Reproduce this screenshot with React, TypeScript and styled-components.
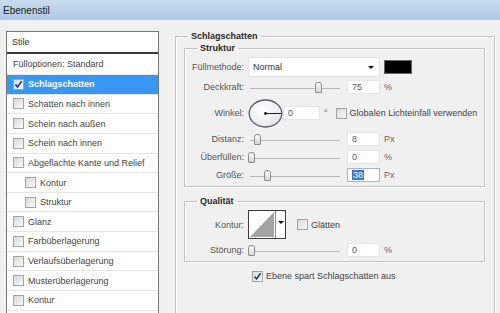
import React from "react";
import styled, { createGlobalStyle } from "styled-components";

const GlobalStyle = createGlobalStyle`
  html, body {
    margin: 0;
    padding: 0;
    background: #f0f0f0;
  }
  body {
    font-family: "Liberation Sans", Arial, sans-serif;
    font-size: 9px;
    color: #333;
  }
`;

const Window = styled.div`
  width: 500px;
  height: 313px;
  overflow: hidden;
  background: #f0f0f0;
`;

const TitleBar = styled.div`
  height: 20px;
  padding-left: 3px;
  display: flex;
  align-items: center;
  font-size: 10px;
  color: #1b1b1b;
  background: linear-gradient(#cadbef, #afc7e5);
`;

const Content = styled.div`
  display: flex;
  align-items: flex-start;
  padding-top: 11px;
`;

const StylePanel = styled.div`
  margin-left: 6px;
  width: 151px;
  height: 300px;
  border: 1px solid #74777c;
  background: #fff;
`;

const PanelHeader = styled.div`
  height: 20px;
  padding-left: 5px;
  display: flex;
  align-items: center;
  border-bottom: 2px solid #3a3a3a;
  color: #333;
`;

const StyleRow = styled.div<{ $active?: boolean; $indent?: boolean }>`
  height: 19.65px;
  box-sizing: border-box;
  display: flex;
  align-items: center;
  gap: 4px;
  padding-left: ${(p) => (p.$indent ? 18 : 6)}px;
  border-bottom: 1px solid #e6e6e6;
  background: ${(p) => (p.$active ? "#3797f5" : "#fff")};
  color: ${(p) => (p.$active ? "#fff" : "#444")};
  font-weight: ${(p) => (p.$active ? "bold" : "normal")};
`;

const Box = styled.span<{ $checked?: boolean }>`
  width: 9px;
  height: 9px;
  flex: none;
  display: inline-flex;
  align-items: center;
  justify-content: center;
  border: 1px solid #a4a4a4;
  background: linear-gradient(135deg, #d8d8d8, #fafafa);
`;

const Settings = styled.div`
  margin-left: 16px;
`;

const Frame = styled.fieldset<{ $outer?: boolean }>`
  margin: ${(p) => (p.$outer ? "0" : "0 9px 0 8px")};
  padding: ${(p) => (p.$outer ? "1px 0 30px 0" : "3px 0 3px 0")};
  width: ${(p) => (p.$outer ? "318px" : "auto")};
  min-inline-size: 0;
  border: 1px solid #c3c3c3;
  box-shadow: inset 1px 1px 0 #fff, 1px 1px 0 #fff;
  display: flex;
  flex-direction: column;
`;

const Legend = styled.legend`
  margin-left: 12px;
  padding: 0 3px;
  font-weight: bold;
  line-height: 11px;
  color: #262626;
`;

const Spaced = styled.div<{ $top: number }>`
  margin-top: ${(p) => p.$top}px;
`;

const Row = styled.div<{ $h: number; $mt?: number; $mb?: number }>`
  height: ${(p) => p.$h}px;
  margin-top: ${(p) => p.$mt ?? 0}px;
  margin-bottom: ${(p) => p.$mb ?? 0}px;
  display: flex;
  align-items: center;
`;

const Label = styled.span`
  width: 59px;
  margin-right: 4px;
  text-align: right;
  color: #555;
  flex: none;
`;

const Select = styled.div`
  width: 130px;
  height: 19px;
  border: 1px solid #e4e4e4;
  background: #fff;
  display: flex;
  align-items: center;
  justify-content: space-between;
  padding: 0 5px 0 4px;
  box-sizing: border-box;
  width: 132px;
  height: 20px;
  color: #333;
`;

const Arrow = styled.span`
  width: 0;
  height: 0;
  border-left: 3px solid transparent;
  border-right: 3px solid transparent;
  border-top: 3px solid #111;
`;

const Swatch = styled.div`
  width: 26px;
  height: 12px;
  margin-left: 4px;
  background: #000;
  border: 1px solid #666;
`;

const Track = styled.div`
  width: 94px;
  height: 11px;
  display: flex;
  align-items: center;
  background: linear-gradient(#b9b9b9, #b9b9b9) no-repeat 2px 6px / 90px 1px;
`;

const Thumb = styled.span`
  width: 5px;
  height: 9px;
  border: 1px solid #8c8c8c;
  border-radius: 3px 3px 1px 1px;
  background: linear-gradient(#fdfdfd, #d6d6d6);
`;

const Field = styled.div<{ $w?: number; $focus?: boolean }>`
  width: ${(p) => p.$w ?? 33}px;
  height: 14px;
  margin-left: 5px;
  box-sizing: border-box;
  border: 1px solid ${(p) => (p.$focus ? "#9ab8df" : "#e6e6e6")};
  background: #fff;
  display: flex;
  align-items: center;
  padding-left: 4px;
  color: #5a5a5a;
`;

const Selected = styled.span`
  background: #3a78d6;
  color: #fff;
  padding: 0 1px;
`;

const Unit = styled.span`
  margin-left: 4px;
  color: #666;
`;

const Check = styled.label`
  display: flex;
  align-items: center;
  gap: 3px;
  color: #444;
`;

const ContourBox = styled.div`
  width: 36px;
  height: 27px;
  border: 1px solid #3c3c3c;
  display: flex;
  background: #fff;
`;

const ContourArrow = styled.div`
  width: 10px;
  border-left: 1px solid #888;
  display: flex;
  justify-content: center;
  padding-top: 10px;
  box-sizing: border-box;
`;

const CheckMark = () => (
  <svg width="9" height="9" viewBox="0 0 9 9">
    <path d="M1.5 4.5 L3.6 7 L7.6 1.3" fill="none" stroke="#1f3a8a" strokeWidth="1.6" />
  </svg>
);

const Slider = ({ at }: { at: number }) => (
  <Track>
    <Thumb style={{ marginLeft: at }} />
  </Track>
);

const Dial = () => (
  <svg width="35" height="29" viewBox="0 0 35 29">
    <defs>
      <radialGradient id="dialFill" cx="40%" cy="35%" r="70%">
        <stop offset="0" stopColor="#ffffff" />
        <stop offset="1" stopColor="#e4e6ea" />
      </radialGradient>
    </defs>
    <ellipse cx="17.5" cy="14.5" rx="16.3" ry="13.5" fill="url(#dialFill)" stroke="#56606c" strokeWidth="1.3" />
    <line x1="17.5" y1="14.5" x2="33.5" y2="14.5" stroke="#222" strokeWidth="1" />
    <circle cx="17.5" cy="14.5" r="1.4" fill="#111" />
  </svg>
);

const styles: { name: string; indent?: boolean; active?: boolean }[] = [
  { name: "Schlagschatten", active: true },
  { name: "Schatten nach innen" },
  { name: "Schein nach außen" },
  { name: "Schein nach innen" },
  { name: "Abgeflachte Kante und Relief" },
  { name: "Kontur", indent: true },
  { name: "Struktur", indent: true },
  { name: "Glanz" },
  { name: "Farbüberlagerung" },
  { name: "Verlaufsüberlagerung" },
  { name: "Musterüberlagerung" },
  { name: "Kontur" },
];

const App: React.FC = () => {
  return (
    <Window>
      <GlobalStyle />
      <TitleBar>Ebenenstil</TitleBar>
      <Content>
        <StylePanel>
          <PanelHeader>Stile</PanelHeader>
          <StyleRow style={{ height: 21 }}>Fülloptionen: Standard</StyleRow>
          {styles.map((s, i) => (
            <StyleRow key={i} $active={s.active} $indent={s.indent}>
              <Box $checked={s.active}>{s.active && <CheckMark />}</Box>
              {s.name}
            </StyleRow>
          ))}
        </StylePanel>

        <Settings>
          <Frame $outer>
            <Legend>Schlagschatten</Legend>
            <Frame>
              <Legend>Struktur</Legend>
              <Row $h={20}>
                <Label>Füllmethode:</Label>
                <Select>
                  Normal
                  <Arrow />
                </Select>
                <Swatch />
              </Row>
              <Row $h={16} $mt={2}>
                <Label>Deckkraft:</Label>
                <Slider at={67} />
                <Field>75</Field>
                <Unit>%</Unit>
              </Row>
              <Row $h={28} $mt={4} $mb={2}>
                <Label>Winkel:</Label>
                <Dial />
                <Field $w={37} style={{ marginLeft: 0 }}>0</Field>
                <Unit>°</Unit>
                <Check style={{ marginLeft: 8 }}>
                  <Box />
                  Globalen Lichteinfall verwenden
                </Check>
              </Row>
              <Row $h={16} $mt={2}>
                <Label>Distanz:</Label>
                <Slider at={6} />
                <Field>8</Field>
                <Unit>Px</Unit>
              </Row>
              <Row $h={16} $mt={2}>
                <Label>Überfüllen:</Label>
                <Slider at={0} />
                <Field>0</Field>
                <Unit>%</Unit>
              </Row>
              <Row $h={16} $mt={2}>
                <Label>Größe:</Label>
                <Slider at={16} />
                <Field $focus>
                  <Selected>38</Selected>
                </Field>
                <Unit>Px</Unit>
              </Row>
            </Frame>

            <Spaced $top={9}>
              <Frame>
                <Legend>Qualität</Legend>
                <Row $h={29} $mt={0}>
                  <Label>Kontur:</Label>
                  <ContourBox>
                    <svg width="26" height="27" viewBox="0 0 26 27">
                      <polygon points="1,26 25,1 25,26" fill="#a3a3a3" />
                    </svg>
                    <ContourArrow>
                      <Arrow />
                    </ContourArrow>
                  </ContourBox>
                  <Check style={{ marginLeft: 11 }}>
                    <Box />
                    Glätten
                  </Check>
                </Row>
                <Row $h={16} $mt={3}>
                  <Label>Störung:</Label>
                  <Slider at={0} />
                  <Field>0</Field>
                  <Unit>%</Unit>
                </Row>
              </Frame>
            </Spaced>

            <Row $h={14} $mt={7} style={{ paddingLeft: 76 }}>
              <Check>
                <Box $checked>
                  <CheckMark />
                </Box>
                Ebene spart Schlagschatten aus
              </Check>
            </Row>
          </Frame>
        </Settings>
      </Content>
    </Window>
  );
};

export default App;
